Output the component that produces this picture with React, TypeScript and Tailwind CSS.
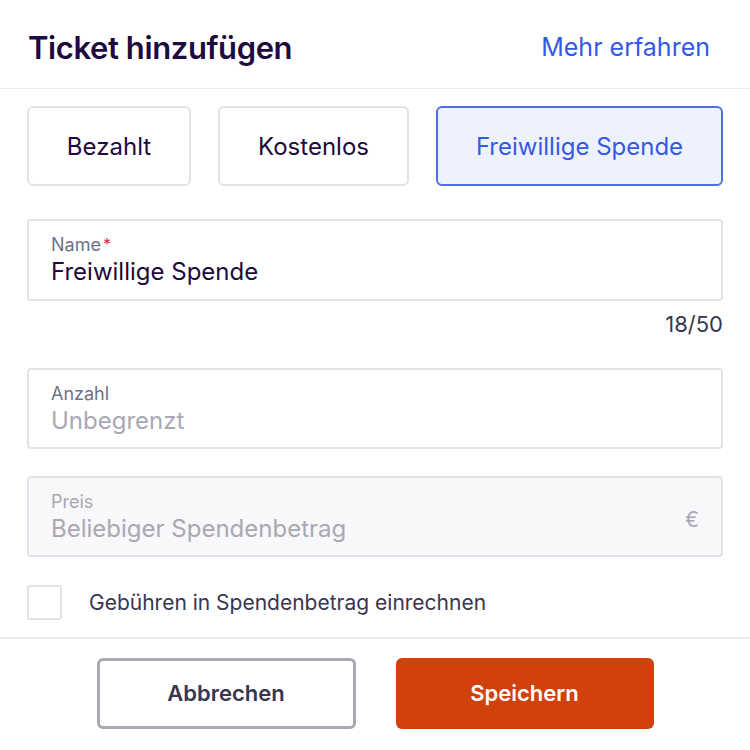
import React from 'react';

const types = [
    { label: "Bezahlt", width: "w-[164px]", active: false },
    { label: "Kostenlos", width: "w-[191px]", active: false },
    { label: "Freiwillige Spende", width: "flex-1", active: true },
];

export default function App() {
    return (
        <div className="w-[750px] h-[750px] bg-white text-[#1e0a3c] font-['Inter',sans-serif] flex flex-col overflow-hidden">
            <div className="h-[89px] flex items-center justify-between px-[28px] pt-[8px] border-b border-[#eeedf2]">
                <h2 className="text-[31px] font-semibold tracking-[-0.4px]">Ticket hinzufügen</h2>
                <a className="text-[25px] text-[#3659e3] mr-[12px]">Mehr erfahren</a>
            </div>

            <div className="px-[27px] pt-[17px] flex flex-col">
                <div className="flex gap-[27px]">
                    {types.map((t) => (
                        <button
                            key={t.label}
                            className={
                                t.active
                                    ? `${t.width} h-[80px] pt-[2px] rounded-[6px] border-2 border-[#4f6fe3] bg-[#eef2fe] text-[#3659e3] text-[24px]`
                                    : `${t.width} h-[80px] pt-[2px] rounded-[6px] border-2 border-[#e3e2e8] bg-white text-[24px]`
                            }
                        >
                            {t.label}
                        </button>
                    ))}
                </div>

                <div className="mt-[33px] h-[82px] rounded-[4px] border-2 border-[#e3e2e8] px-[22px] pt-[11px]">
                    <div className="text-[18px] text-[#6f7287] leading-[25px]">
                        Name<span className="text-[#e0284f] text-[16px] align-top ml-[2px]">*</span>
                    </div>
                    <div className="text-[24px] leading-[30px] text-[#1e0a3c]">Freiwillige Spende</div>
                </div>
                <div className="text-right text-[22px] text-[#39364f] mt-[9px] leading-[28px]">18/50</div>

                <div className="mt-[30px] h-[81px] rounded-[4px] border-2 border-[#e3e2e8] px-[22px] pt-[11px]">
                    <div className="text-[18px] text-[#6f7287] leading-[25px]">Anzahl</div>
                    <div className="text-[24px] leading-[30px] text-[#a9a8b3]">Unbegrenzt</div>
                </div>

                <div className="mt-[27px] h-[81px] rounded-[4px] border-2 border-[#e3e2e8] bg-[#f8f7fa] pl-[22px] pr-[22px] pt-[11px] flex justify-between">
                    <div>
                        <div className="text-[18px] text-[#a9a8b3] leading-[25px]">Preis</div>
                        <div className="text-[24px] leading-[30px] text-[#a9a8b3]">Beliebiger Spendenbetrag</div>
                    </div>
                    <div className="text-[21px] text-[#a9a8b3] mt-[15px]">€</div>
                </div>

                <label className="mt-[28px] flex items-center gap-[27px]">
                    <span className="w-[35px] h-[35px] rounded-[3px] border-2 border-[#e3e2e8] bg-white" />
                    <span className="text-[21px] text-[#39364f]">Gebühren in Spendenbetrag einrechnen</span>
                </label>
            </div>

            <div className="mt-[17px] border-t-2 border-[#eeedf2] flex justify-center gap-[40px] pt-[19px]">
                <button className="w-[259px] h-[71px] rounded-[6px] border-[3px] border-[#a9a8b3] bg-white text-[22px] font-semibold text-[#39364f]">
                    Abbrechen
                </button>
                <button className="w-[258px] h-[71px] rounded-[6px] bg-[#d1410c] text-[22px] font-semibold text-white">
                    Speichern
                </button>
            </div>
        </div>
    );
}
